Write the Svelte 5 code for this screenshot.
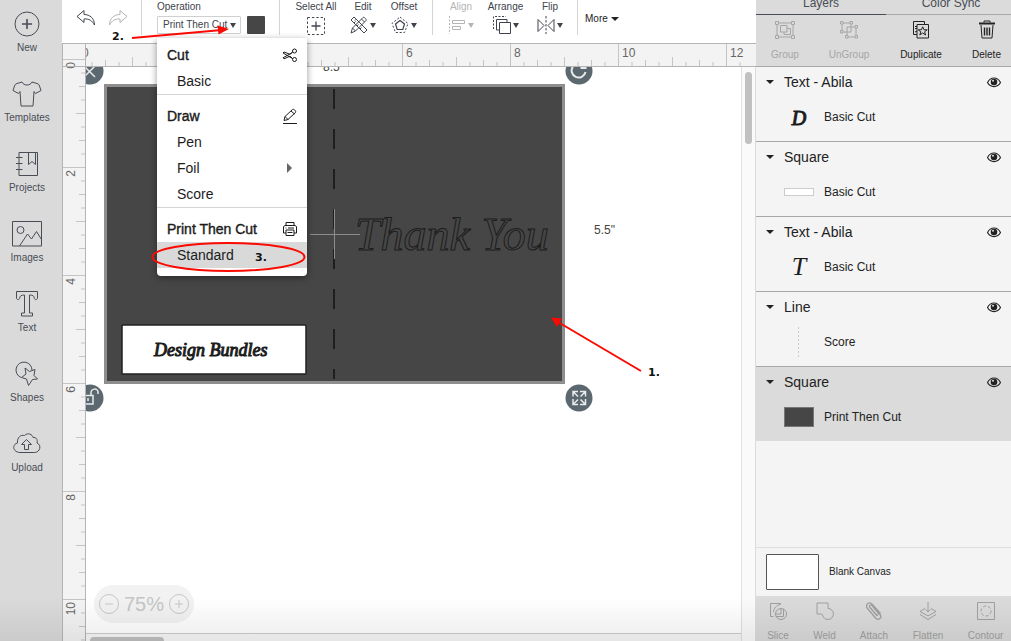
<script>
  // ruler scale: one inch is 54px at this zoom
  const inch = 54;
  const marks = [];
  for (let q = 0; q <= 49; q++) {
    const unit = q / 4;
    let size = 4;
    if (q % 2 === 0) size = 6;
    if (q % 4 === 0) size = 9;
    if (q % 8 === 0) size = 22;
    marks.push({ unit, size, at: unit * inch, major: q % 8 === 0 });
  }
  const sideMarks = marks.filter((m) => m.unit < 12);

  const tools = ['New', 'Templates', 'Projects', 'Images', 'Text', 'Shapes', 'Upload'];

  const layers = [
    { name: 'Text - Abila', op: 'Basic Cut', thumb: 'D' },
    { name: 'Square', op: 'Basic Cut', thumb: 'card' },
    { name: 'Text - Abila', op: 'Basic Cut', thumb: 'T' },
    { name: 'Line', op: 'Score', thumb: 'line' },
    { name: 'Square', op: 'Print Then Cut', thumb: 'dark', selected: true }
  ];

  const menu = [
    { title: 'Cut', items: ['Basic'] },
    { title: 'Draw', items: ['Pen', 'Foil', 'Score'] },
    { title: 'Print Then Cut', items: ['Standard'] }
  ];

  let operation = $state('Print Then Cut');
  let zoom = $state(75);
</script>

<div class="app">
  <nav class="sidebar">
    {#each tools as tool}
      <button class="tool">
        <svg width="30" height="26" viewBox="0 0 30 26" class="line">
          {#if tool === 'New'}
            <circle cx="15" cy="13" r="12" />
            <path d="M15 8v10M10 13h10" stroke-width="1.6" />
          {:else if tool === 'Templates'}
            <path d="M10 1L5 2.500C3.500 3 3 3.500 2.500 5L1 9.500l5.500 3L8 10.500l1 14.500h12l1-14.500 1.500 2 5.500-3-1.500-4.500c-.5-1.500-1-2-2.500-2.500L20 1c-1.500 4-8.500 4-10 0z" />
          {:else if tool === 'Projects'}
            <path d="M7 1.500h18.500v23H7zM4 6.500h6.500M4 12.500h6.500M4 18.500h6.500M16.500 2v11.500l3.500-3 3.500 3V2" />
          {:else if tool === 'Images'}
            <path d="M.5.500h29v24.500H.5zM7.500 25l8-12 4 5 5-7.500 5 8" />
            <circle cx="8.500" cy="9" r="3.500" />
          {:else if tool === 'Text'}
            <path d="M4.500.500h21v7c-1.500 2-3 1-3.200-.5-.3-2-1.300-3-4.800-3v18h3v3h-11v-3h3V4c-3.500 0-4.500 1-4.800 3-.2 1.500-1.700 2.500-3.200.5z" />
          {:else if tool === 'Shapes'}
            <path d="M9 16.500A8 8 0 1 1 20 9" />
            <path d="M13 7l4.500 3.500L23 8.500l-1 6 3.500 3.500-5 .5-4 6-2-6.500-5-1.500 4.500-3.500z" />
          {:else}
            <path d="M8 21.500c-7 0-8.500-8-2.500-9.500C5 6 9 3.500 12.500 4.500c3.500-3.500 8-1 8.500 2 3-.5 5 2 4 5.500 5 2 3 9.500-2.500 9.500z" />
            <path d="M12.500 18.500v-5H9.500L14.500 8.500l5 5h-3v5z" />
          {/if}
        </svg>
        <span>{tool}</span>
      </button>
    {/each}
  </nav>

  <main class="main">
    <header class="toolbar">
      <div class="history">
        <button aria-label="Undo">
          <svg width="20" height="18" viewBox="0 0 20 18" class="line">
            <path d="M8 1.500L1 7.500l7 6V10c5-.5 8 1.500 10.500 6C18.500 9.500 14 5.500 8 5.500z" />
          </svg>
        </button>
        <button aria-label="Redo" class="off">
          <svg width="20" height="18" viewBox="0 0 20 18" class="line">
            <path d="M12 1.500l7 6-7 6V10c-5-.5-8 1.500-10.500 6C1.500 9.500 6 5.500 12 5.500z" />
          </svg>
        </button>
      </div>

      <div class="operation">
        <label for="operation">Operation</label>
        <div class="operation-row">
          <div class="picker">
            <select id="operation" bind:value={operation}>
              <option>Print Then Cut</option>
              <option>Basic Cut</option>
              <option>Score</option>
            </select>
            <span class="caret"></span>
          </div>
          <button class="swatch" aria-label="Material colour"></button>
        </div>

        <div class="menu">
          {#each menu as group}
            <div class="menu-group">
              <div class="menu-title">
                <span>{group.title}</span>
                <svg width="16" height="16" viewBox="0 0 16 16" class="line">
                  {#if group.title === 'Cut'}
                    <circle cx="12.500" cy="4" r="2" />
                    <circle cx="12.500" cy="12.500" r="2" />
                    <path d="M10.500 5L8 7.300 2 5 1 6l9.500 5.500M10.500 11.500L8 9.200 2 11.800 1 10.800 10.500 5.500" />
                  {:else if group.title === 'Draw'}
                    <path d="M2 12.500l1-4 7.500-7c1-1 4 1.500 3 3l-7.500 7zM9 3l3.500 3M3 8.500l3 3M1 15.500h14" />
                  {:else}
                    <path d="M4 5V1.500h8V5M4 12H1.500V5.500L3 4.500h10l1.500 1V12H12M4 9h8v5.500H4zM5.500 11.500h5M3.500 7h1M6 7h6" />
                  {/if}
                </svg>
              </div>
              {#each group.items as item}
                <button class="menu-item" class:active={item === 'Standard'}>
                  <span>{item}</span>
                  {#if item === 'Foil'}<span class="side-arrow"></span>{/if}
                </button>
              {/each}
            </div>
          {/each}
        </div>
      </div>

      <div class="group edit-group">
        <button class="action">
          <span>Select All</span>
          <svg width="20" height="20" viewBox="0 0 20 20" class="line">
            <path d="M1.500 1.500h17v17h-17z" stroke-dasharray="2.400 2" />
            <path d="M10 5.500v9M5.500 10h9" stroke-width="1.300" />
          </svg>
        </button>
        <button class="action">
          <span>Edit</span>
          <div class="with-caret">
            <svg width="18" height="18" viewBox="0 0 18 18" class="line">
              <path d="M1 4l3-3 13 13-3 3zM4 7l1.500-1.500M7 10l1.500-1.500M10 13l1.500-1.500M5 4.500L6.500 3" />
              <path d="M1 17l1.500-5L13 1.500c1-1 4 2 3 3L5.500 15zM2.500 12l3 3M11.500 3l3 3" />
            </svg>
            <span class="caret"></span>
          </div>
        </button>
        <button class="action">
          <span>Offset</span>
          <div class="with-caret">
            <svg width="18" height="18" viewBox="0 0 18 18" class="line">
              <path d="M9 4.500l4.500 3.500-1.700 5.500H6.200L4.500 8z" stroke-width="1.200" />
              <path d="M9 1l8 6.500-3.500 9h-9L1 7.500z" stroke-dasharray="2 1.800" stroke-linejoin="round" />
            </svg>
            <span class="caret"></span>
          </div>
        </button>
      </div>

      <div class="group arrange-group">
        <button class="action off">
          <span>Align</span>
          <div class="with-caret">
            <svg width="18" height="18" viewBox="0 0 18 18" class="line">
              <path d="M1.500 0v18" stroke-dasharray="2 1.500" />
              <path d="M4.500 4.500h12v3h-12zM4.500 10.500h8v3h-8z" />
            </svg>
            <span class="caret"></span>
          </div>
        </button>
        <button class="action">
          <span>Arrange</span>
          <div class="with-caret">
            <svg width="18" height="18" viewBox="0 0 18 18" class="line">
              <path d="M.5 13V.500H13" stroke-dasharray="2 1.500" />
              <path d="M6.500 6.500h11v11h-11zM6.500 14h-3V3.500H14v3" />
            </svg>
            <span class="caret"></span>
          </div>
        </button>
        <button class="action">
          <span>Flip</span>
          <div class="with-caret">
            <svg width="18" height="18" viewBox="0 0 18 18" class="line">
              <path d="M1 3.500v12L7 9.500zM17 3.500v12L11 9.500z" />
              <path d="M9 0v18" stroke-dasharray="2.500 1.500" />
            </svg>
            <span class="caret"></span>
          </div>
        </button>
      </div>

      <button class="more">More <span class="wide-caret"></span></button>
    </header>

    <div class="workspace">
      <svg class="ruler-left" width="24">
        {#each sideMarks as m}
          {#if m.major}
            <line x1="1" x2="23" y1={m.at + 15.5} y2={m.at + 15.5} />
            <text transform="translate(13 {m.at + 18}) rotate(-90)" text-anchor="end">{m.unit}</text>
          {:else}
            <line x1={23 - m.size} x2="23" y1={m.at + 15.5} y2={m.at + 15.5} />
          {/if}
        {/each}
        <line x1="0" x2="24" y1="22.5" y2="22.5" class="edge" />
        <path d="M.5 0V2000M23.5 0V2000" class="edge" />
      </svg>

      <div class="board">
        <svg class="ruler-top" height="23">
          {#each marks as m}
            <line x1={m.at - 7.5} x2={m.at - 7.5} y1={22 - m.size} y2="22" />
            {#if m.major}
              <text x={m.at - 4} y="13">{m.unit}</text>
            {/if}
          {/each}
        </svg>

        <div class="viewport">
          <div class="canvas">
            <!-- artwork is placed in page units, shifted by the toolbar and ruler -->
            <svg class="art">
              <g transform="translate(-86 -67)">
                <text x="323" y="71" class="measure">8.5"</text>
                <text x="594" y="234" class="measure">5.5"</text>
                <rect x="105.500" y="85.500" width="458" height="297" fill="#464646" stroke="#8e8e8e" stroke-width="3" />
                <path d="M334 89V379" stroke="#1f1f1f" stroke-width="2" stroke-dasharray="20 20" />
                <path d="M310 234.500h50M334.500 209v50" stroke="#8c8c8c" />
                <text x="355" y="250" class="script thank">Thank You</text>
                <rect x="122" y="325" width="184" height="49" rx="1" fill="#fff" stroke="#222" stroke-width="1.500" />
                <text x="154" y="356" class="script design">Design Bundles</text>

                {#each [[90, 71], [579, 71], [90, 398], [579, 398]] as [x, y]}
                  <circle cx={x} cy={y} r="13.500" fill="#5b6870" />
                {/each}
                <g fill="none" stroke="#e8eaeb" stroke-width="1.500">
                  <path d="M84 66l11 11M95 66L84 77" />
                  <path d="M584 66a7 7 0 1 0 1.500 6M585.500 63v5h-5" stroke-width="2" />
                  <path d="M84 395.500h9v8.500h-9zM91 395v-2c0-5 7-5 7-1v2M88 398v3" />
                  <path d="M573 396.500v-5h5M573 391.500l5 5M580 391.500h5.500v5M585.500 391.500l-5 5M573 399v5.500h5M573 404.500l5-5M585.500 399v5.500h-5.500M585.500 404.500l-5-5" />
                </g>
              </g>
            </svg>

            <div class="zoom">
              <button aria-label="Zoom out" onclick={() => (zoom -= 5)}>
                <svg width="20" height="20" viewBox="0 0 20 20" class="line"><circle cx="10" cy="10" r="9.500" /><path d="M6 10h8" /></svg>
              </button>
              <span>{zoom}%</span>
              <button aria-label="Zoom in" onclick={() => (zoom += 5)}>
                <svg width="20" height="20" viewBox="0 0 20 20" class="line"><circle cx="10" cy="10" r="9.500" /><path d="M6 10h8M10 6v8" /></svg>
              </button>
            </div>
            <div class="track-x"><div class="thumb-x"></div></div>
          </div>
          <div class="track-y"><div class="thumb-y"></div></div>
        </div>
      </div>
    </div>
  </main>

  <aside class="panel">
    <div class="tabs">
      <button class="tab current">Layers</button>
      <button class="tab">Color Sync</button>
    </div>

    <div class="panel-actions">
      <button class="off">
        <svg width="22" height="20" viewBox="0 0 22 20" class="line">
          <path d="M3 3h16v14H3zM6.500 5.500h6.500v6.500H6.500zM13 8.500h3.500v6h-6.500v-2.500" />
          <path d="M1.500 1.500h3v3h-3zM17.500 1.500h3v3h-3zM1.500 15.500h3v3h-3zM17.500 15.500h3v3h-3z" fill="#dbdbdb" />
        </svg>
        <span>Group</span>
      </button>
      <button class="off">
        <svg width="22" height="20" viewBox="0 0 22 20" class="line">
          <path d="M4 3h9v9H4zM9 7h9v10H9z" fill="#dbdbdb" />
          <path d="M2.500 1.500h2.500v2.500H2.500zM12 1.500h2.500v2.500H12zM2.500 10.500h2.500V13H2.500zM7.500 15.500H10V18H7.500zM17 15.500h2.500V18H17zM17 5.500h2.500V8H17z" fill="#dbdbdb" />
        </svg>
        <span>UnGroup</span>
      </button>
      <button>
        <svg width="22" height="20" viewBox="0 0 22 20" class="line">
          <path d="M7 14.500H3.500V1.500h11v3M5 6.500h2M5 8.500h2M5 12l2-1" />
          <path d="M7 4.500h11.500v13.500H7z" />
          <path d="M12.700 6.800l1.300 3h3.200l-2.600 2 1 3.200-2.900-2-2.900 2 1-3.200-2.600-2h3.200z" />
        </svg>
        <span>Duplicate</span>
      </button>
      <button>
        <svg width="22" height="20" viewBox="0 0 22 20" class="line">
          <path d="M3 3.500h16" stroke-width="2" />
          <path d="M8 2.500V1h6v1.500M5 5l1 13h10l1-13" />
          <path d="M8.500 7.500v8M11 7.500v8M13.500 7.500v8" stroke-width="1.400" />
        </svg>
        <span>Delete</span>
      </button>
    </div>

    <ul class="layers">
      {#each layers as layer}
        <li class:selected={layer.selected}>
          <div class="layer-head">
            <span class="wide-caret"></span>
            <span class="layer-name">{layer.name}</span>
            <button class="eye" aria-label="Toggle {layer.name}">
              <svg width="14" height="12" viewBox="0 0 14 12">
                <path d="M.5 6.500C3.500.500 10.500.500 13.500 6.500 10.500 12 3.500 12 .5 6.500z" fill="none" stroke="#222" stroke-width="1.200" />
                <circle cx="7" cy="6" r="3.300" fill="#222" />
                <circle cx="6" cy="4.800" r="1" fill="#ddd" />
              </svg>
            </button>
          </div>
          <div class="layer-body">
            <svg width="30" height="30" viewBox="0 0 30 30">
              {#if layer.thumb === 'card'}
                <rect x=".5" y="11.500" width="29" height="7" fill="#fff" stroke="#ccc" />
              {:else if layer.thumb === 'line'}
                <path d="M14.500 0v30" stroke="#ccc" stroke-dasharray="2 2" />
              {:else if layer.thumb === 'dark'}
                <rect x=".5" y="5.500" width="29" height="19" fill="#464646" stroke="#777" />
              {:else}
                <text x="15" y="23" text-anchor="middle" class="script letter" class:small={layer.thumb === 'D'}>{layer.thumb}</text>
              {/if}
            </svg>
            <span>{layer.op}</span>
          </div>
        </li>
      {/each}
    </ul>

    <div class="blank">
      <div class="blank-box"></div>
      <span>Blank Canvas</span>
    </div>

    <div class="panel-tools">
      <button>
        <svg width="20" height="20" viewBox="0 0 20 20" class="line">
          <path d="M5.500 15.500h-3v-13h10.500M13 3c-5 1.500-7 4-7.500 8" />
          <circle cx="13" cy="13" r="5.500" />
          <path d="M8 13h5V7.500M8 15.500h7.500V8" />
        </svg>
        <span>Slice</span>
      </button>
      <button>
        <svg width="20" height="20" viewBox="0 0 20 20" class="line">
          <path d="M2 2h11v5.500a5.500 5.500 0 1 1-5.500 6.500L6.500 13H2z" />
        </svg>
        <span>Weld</span>
      </button>
      <button>
        <svg width="20" height="20" viewBox="0 0 20 20" class="line">
          <path d="M13.500 15L6 6.500c-1.500-2 .5-3.500 2-2l8 9c2.500 3.500-1.500 6-4 4l-8.500-10C1 4 4.500 0 8 3l8.500 9.500" stroke-width="1.300" />
          <path d="M6 6.500l6 7c1.500 1.500 3 0 2-1.500L9 6" />
        </svg>
        <span>Attach</span>
      </button>
      <button>
        <svg width="20" height="20" viewBox="0 0 20 20" class="line">
          <path d="M10 1v10M7.500 8.500L10 11l2.500-2.500M7 7.500L2 10.500l8 4.500 8-4.500-5-3M2 13.500l8 5 8-5" />
        </svg>
        <span>Flatten</span>
      </button>
      <button>
        <svg width="20" height="20" viewBox="0 0 20 20" class="line">
          <path d="M1.500 1.500h17v17h-17z" />
          <circle cx="10" cy="10" r="5" stroke-dasharray="3 2" />
        </svg>
        <span>Contour</span>
      </button>
    </div>
  </aside>

  <svg class="notes">
    <g fill="none" stroke="#fb0a02" stroke-width="2">
      <path d="M132 38l90-8" />
      <path d="M641 371l-83-49" />
      <ellipse cx="228.500" cy="257" rx="76" ry="14" />
    </g>
    <path d="M229 29l-11.500-3.500 1 9zM551 317.500l11 1-5 8.500z" fill="#fb0a02" />
    <text x="112" y="40">2.</text>
    <text x="255" y="261">3.</text>
    <text x="648" y="376">1.</text>
  </svg>
</div>

<style>
  :global(body) {
    margin: 0;
    overflow: hidden;
    font-family: 'Liberation Sans', Arial, sans-serif;
    color: #222;
  }

  .app {
    position: relative;
    display: flex;
    height: 100vh;
    overflow: hidden;
    font-size: 10px;
    line-height: 12px;
  }
  /* soft shade along the lower edge of the window */
  .app::after {
    content: '';
    position: absolute;
    left: 0;
    right: 0;
    bottom: 0;
    height: 44px;
    background: linear-gradient(rgba(0, 0, 0, 0), rgba(0, 0, 0, 0.07));
    pointer-events: none;
  }

  button {
    padding: 0;
    border: 0;
    background: none;
    font: inherit;
    color: inherit;
    white-space: nowrap;
  }
  svg {
    display: block;
    flex-shrink: 0;
  }
  .line {
    fill: none;
    stroke: currentColor;
    stroke-width: 1;
  }

  .sidebar {
    box-sizing: border-box;
    width: 62px;
    flex-shrink: 0;
    padding: 11px 8px 0 0;
    display: flex;
    flex-direction: column;
    gap: 27px;
    background: #dadada;
    color: #484c55;
  }
  .tool {
    display: flex;
    flex-direction: column;
    align-items: center;
    gap: 5px;
  }

  .main {
    flex: 1;
    min-width: 0;
    display: flex;
    flex-direction: column;
  }

  .toolbar {
    box-sizing: border-box;
    height: 44px;
    flex-shrink: 0;
    display: flex;
    align-items: flex-start;
    background: #fff;
    border-bottom: 1px solid #b4b4b4;
    color: #40444d;
  }
  .history {
    box-sizing: border-box;
    width: 80px;
    height: 35px;
    padding: 9px 0 0 14px;
    display: flex;
    align-items: flex-start;
    gap: 12px;
    border-right: 1px solid #d4d4d4;
  }
  .off {
    color: #b5b5b5;
  }
  .operation {
    position: relative;
    box-sizing: border-box;
    width: 138px;
    height: 35px;
    padding: 1px 0 0 15px;
    border-right: 1px solid #d4d4d4;
  }
  .operation label {
    display: block;
  }
  .operation-row {
    display: flex;
    gap: 6px;
    padding-top: 3px;
  }
  .picker {
    display: grid;
    align-items: center;
  }
  .picker select {
    grid-area: 1 / 1;
    box-sizing: border-box;
    width: 84px;
    height: 18px;
    padding: 0 0 0 5px;
    border: 1px solid #d0d0d0;
    border-radius: 1px;
    background: #fff;
    appearance: none;
    font: inherit;
    color: inherit;
  }
  .picker .caret {
    grid-area: 1 / 1;
    justify-self: end;
    margin-right: 5px;
    pointer-events: none;
  }
  .swatch {
    width: 18px;
    height: 18px;
    border-radius: 1px;
    background: #464646;
  }
  .caret {
    border: 3px solid transparent;
    border-top: 5px solid currentColor;
    border-bottom: 0;
  }
  .wide-caret {
    border: 4px solid transparent;
    border-top-color: #222;
    border-bottom: 0;
  }

  .menu {
    position: absolute;
    z-index: 2;
    top: 38px;
    left: 15px;
    width: 150px;
    border-radius: 0 0 4px 4px;
    background: #fff;
    box-shadow: 0 2px 7px rgba(0, 0, 0, 0.4);
    color: #1c1c1c;
    font-size: 14px;
    line-height: 26px;
  }
  .menu-group {
    padding-top: 8px;
    border-bottom: 1px solid #d4d4d4;
  }
  .menu-group:first-child {
    padding-top: 4px;
  }
  .menu-group:last-child {
    padding-bottom: 8px;
    border-bottom: 0;
  }
  .menu-title {
    display: flex;
    align-items: center;
    justify-content: space-between;
    padding: 0 9px 0 10px;
    -webkit-text-stroke: 0.4px currentColor;
  }
  .menu-item {
    width: 100%;
    height: 26px;
    padding: 0 15px 0 20px;
    display: flex;
    align-items: center;
    justify-content: space-between;
  }
  .menu-item.active {
    background: #d9d9d9;
  }
  .side-arrow {
    border: 5px solid transparent;
    border-left-color: #666;
    border-right: 0;
  }

  .group {
    box-sizing: border-box;
    height: 35px;
    padding-top: 1px;
    display: grid;
    border-right: 1px solid #d4d4d4;
  }
  .edit-group {
    width: 153px;
    padding-left: 12px;
    grid-template-columns: 48px 46px 36px;
  }
  .arrange-group {
    width: 145px;
    padding-left: 8px;
    grid-template-columns: 40px 49px 40px;
  }
  .action {
    display: flex;
    flex-direction: column;
    align-items: center;
    justify-content: flex-start;
    gap: 3px;
  }
  .with-caret {
    display: flex;
    align-items: center;
    gap: 2px;
  }
  .more {
    margin: 13px 0 0 7px;
    display: flex;
    align-items: center;
    gap: 3px;
    color: #1c1c1c;
  }

  .workspace {
    flex: 1;
    min-height: 0;
    display: flex;
  }
  .ruler-left {
    height: 100%;
    background: #f3f3f3;
  }
  .ruler-left line,
  .ruler-top line {
    stroke: #c4c4c4;
  }
  .ruler-left text,
  .ruler-top text {
    font-size: 12px;
    fill: #666;
  }
  .ruler-left .edge {
    stroke: #b4b4b4;
    fill: none;
  }
  .board {
    flex: 1;
    min-width: 0;
    display: flex;
    flex-direction: column;
  }
  .ruler-top {
    box-sizing: border-box;
    width: 100%;
    background: #f3f3f3;
    border-bottom: 1px solid #b4b4b4;
  }
  .viewport {
    flex: 1;
    min-height: 0;
    display: flex;
  }
  .canvas {
    position: relative;
    flex: 1;
    min-width: 0;
    display: flex;
    flex-direction: column;
    background: #fff;
  }
  .art {
    width: 100%;
    flex: 1;
    min-height: 0;
  }
  .measure {
    font-size: 12px;
    fill: #444;
  }
  .script {
    font-family: 'Liberation Serif', 'Times New Roman', serif;
    font-style: italic;
  }
  .thank {
    font-size: 46px;
    fill: #464646;
    stroke: #1c1c1c;
  }
  .design {
    font-size: 18px;
    fill: #1c1c1c;
    stroke: #1c1c1c;
  }
  .letter {
    font-size: 26px;
    fill: #1c1c1c;
  }
  .letter.small {
    font-size: 20px;
    stroke: #1c1c1c;
  }

  .zoom {
    position: absolute;
    left: 8px;
    bottom: 18px;
    box-sizing: border-box;
    width: 100px;
    height: 38px;
    padding: 0 5px;
    display: flex;
    align-items: center;
    justify-content: space-between;
    border-radius: 19px;
    background: #f2f2f2;
    color: #c4c6c6;
    font-size: 20px;
    line-height: 24px;
  }
  .track-x {
    height: 8px;
    box-sizing: border-box;
    padding: 3px 0 0 4px;
    border-top: 1px solid #ccc;
    background: #f7f7f7;
  }
  .thumb-x {
    width: 74px;
    height: 8px;
    border-radius: 4px;
    background: #bfbfbf;
  }
  .track-y {
    box-sizing: border-box;
    width: 15px;
    padding: 5px 3px;
    border-left: 1px solid #e0e0e0;
    border-right: 1px solid #dcdcdc;
    background: #fafafa;
  }
  .thumb-y {
    width: 7px;
    height: 72px;
    border-radius: 4px;
    background: #c1c1c1;
  }

  .panel {
    width: 255px;
    flex-shrink: 0;
    display: flex;
    flex-direction: column;
    overflow: hidden;
    background: #f4f4f4;
  }
  .tabs {
    height: 15px;
    flex-shrink: 0;
    display: grid;
    grid-template-columns: 130px 130px;
    align-content: end;
    background: #dbdbdb;
    color: #484c55;
    font-size: 12px;
    line-height: 14px;
  }
  .tab {
    padding-bottom: 4px;
    border-bottom: 1px solid #a8a8a8;
  }
  .tab.current {
    border-color: #484c55;
  }
  .panel-actions {
    height: 51px;
    flex-shrink: 0;
    display: grid;
    grid-template-columns: 58px 70px 74px 57px;
    background: #dbdbdb;
    border-bottom: 1px solid #a8a8a8;
  }
  .panel-actions button,
  .panel-tools button {
    display: flex;
    flex-direction: column;
    align-items: center;
    justify-content: flex-start;
    gap: 9px;
    padding-top: 5px;
  }
  .panel-actions .off {
    color: #a6a6a6;
  }
  .layers {
    flex: 1;
    min-height: 0;
    margin: 0;
    padding: 0;
    list-style: none;
    overflow: hidden;
  }
  .layers li {
    border-bottom: 1px solid #a8a8a8;
  }
  .layers li.selected {
    background: #dbdbdb;
    border-bottom: 0;
  }
  .layer-head {
    height: 30px;
    padding: 0 10px;
    display: flex;
    align-items: center;
    gap: 10px;
    font-size: 14px;
    line-height: 16px;
  }
  .layer-name {
    flex: 1;
  }
  .layer-body {
    height: 44px;
    padding-left: 28px;
    display: flex;
    align-items: flex-start;
    gap: 10px;
    font-size: 12px;
    line-height: 40px;
  }
  .layer-body svg {
    margin-top: 5px;
  }
  .blank {
    height: 48px;
    flex-shrink: 0;
    padding-left: 10px;
    display: flex;
    align-items: center;
    gap: 10px;
    border-top: 1px solid #dfdfdf;
  }
  .blank-box {
    box-sizing: border-box;
    width: 53px;
    height: 36px;
    border: 1px solid #555;
    border-radius: 1px;
    background: #fff;
  }
  .panel-tools {
    height: 45px;
    flex-shrink: 0;
    overflow: hidden;
    display: grid;
    grid-template-columns: 44px 49px 50px 58px 57px;
    background: #dbdbdb;
    color: #a0a0a0;
  }

  .notes {
    position: absolute;
    z-index: 3;
    top: 0;
    left: 0;
    width: 100%;
    height: 100%;
    pointer-events: none;
  }
  .notes text {
    font: bold 11px 'DejaVu Sans', sans-serif;
    fill: #111;
  }
</style>
